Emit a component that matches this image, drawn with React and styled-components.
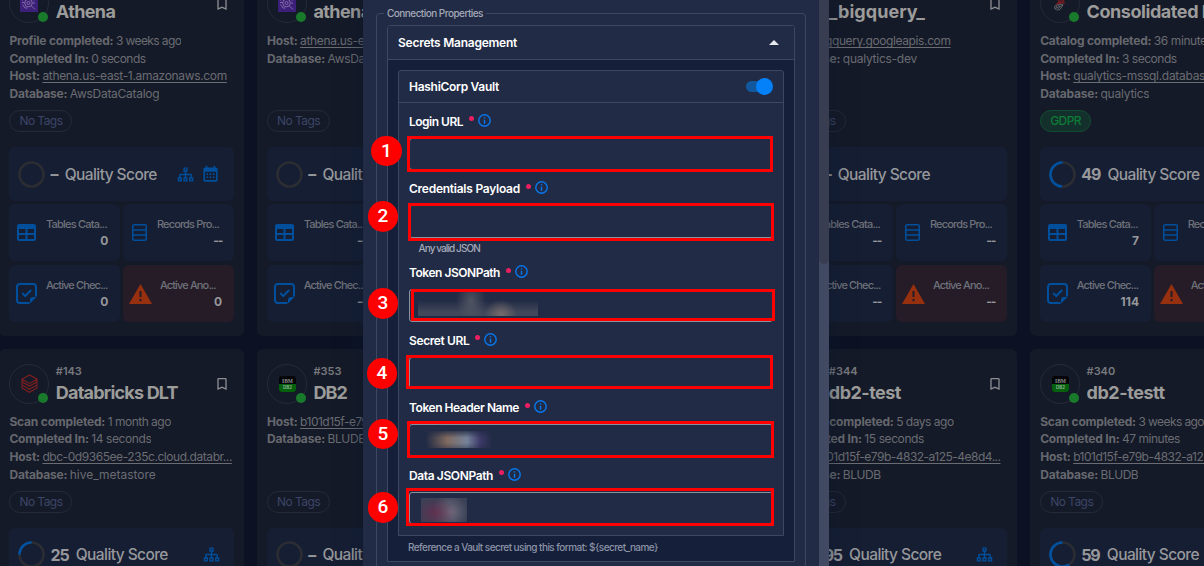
import React from "react";
import styled, { createGlobalStyle } from "styled-components";

const Global = createGlobalStyle`
  *, *::before, *::after { box-sizing: border-box; }
  html, body { margin: 0; padding: 0; background: #0c1223; overflow: hidden; }
  body { font-family: Inter, "Noto Sans", sans-serif; font-size: 12px; }
`;

/* ---------- page and card grid ---------- */

const Page = styled.main`
  position: relative;
  width: 1204px;
  height: 566px;
  overflow: hidden;
  background: #0c1223;
`;

const CardGrid = styled.div`
  display: grid;
  grid-template-columns: repeat(5, 244.8px);
  grid-auto-rows: 367.4px;
  gap: 13.2px 12.9px;
  width: 1290px;
  margin: -31.6px 0 0 -0.6px;
`;

const Card = styled.article`
  display: flex;
  flex-direction: column;
  padding: 15px 10px 0;
  border-radius: 6px;
  background: #151a28;
`;

const CardHeader = styled.header`
  display: flex;
  gap: 6.4px;
  height: 40px;
`;

const Avatar = styled.div`
  position: relative;
  display: flex;
  flex: none;
  align-items: center;
  justify-content: center;
  width: 40px;
  height: 40px;
  border: 1px solid #252b38;
  border-radius: 50%;
`;

const StatusDot = styled.span`
  position: absolute;
  right: 0;
  bottom: 0;
  width: 10px;
  height: 10px;
  border-radius: 50%;
  background: #197a2c;
`;

const Titles = styled.div`
  display: flex;
  flex: 1;
  flex-direction: column;
  gap: 2.7px;
  min-width: 0;
  white-space: nowrap;
`;

const CardId = styled.span`
  font-size: 11px;
  font-weight: 600;
  line-height: 14px;
  color: #77797d;
`;

const CardTitle = styled.h2`
  margin: 0;
  overflow: hidden;
  font-size: 18px;
  font-weight: 700;
  line-height: 24px;
  letter-spacing: ${(p) => p.$ls}em;
  color: #9c9c9b;
`;

const BookmarkSlot = styled.span`
  display: flex;
  align-items: center;
  height: 41px;
  margin-right: 4.5px;
`;

const MetaList = styled.dl`
  height: 70.8px;
  margin: 8.7px 0 0;
`;

const MetaRow = styled.div`
  display: flex;
  gap: 2.5px;
  height: 17.7px;
  line-height: 17.7px;
  white-space: nowrap;
`;

const MetaKey = styled.dt`
  flex: none;
  font-weight: 700;
  letter-spacing: -0.016em;
  color: #66686e;
`;

const MetaValue = styled.dd`
  min-width: 0;
  margin: 0;
  overflow: hidden;
  font-weight: 400;
  letter-spacing: ${(p) => p.$ls}em;
  color: #6a6c72;
  text-decoration: ${(p) => (p.$link ? "underline" : "none")};
  text-underline-offset: 2px;
`;

const Chip = styled.span`
  align-self: flex-start;
  display: flex;
  align-items: center;
  height: 22px;
  margin-top: 7.3px;
  padding: 0 9px 1px;
  border: 1px solid ${(p) => (p.$green ? "#134d31" : "#232a38")};
  border-radius: 11px;
  background: ${(p) => (p.$green ? "#13302c" : "transparent")};
  color: ${(p) => (p.$green ? "#0e7b36" : "#3c4567")};
  font-weight: ${(p) => (p.$green ? 500 : 400)};
  letter-spacing: -0.046em;
`;

const ScoreBox = styled.section`
  display: flex;
  align-items: center;
  height: 54px;
  margin-top: 15.2px;
  padding: 0 14.5px 0 9px;
  border-radius: 6px;
  background: #161e33;
  color: #97989b;
`;

const ScoreValue = styled.strong`
  margin: 0 7.4px 0 5.2px;
  font-size: 16px;
  font-weight: 700;
  letter-spacing: -0.08em;
`;

const ScoreLabel = styled.span`
  flex: 1;
  font-size: 15.5px;
  font-weight: 500;
  letter-spacing: -0.037em;
  white-space: nowrap;
`;

const ScoreIcons = styled.span`
  display: flex;
  align-items: center;
  gap: 7px;
`;

const Tiles = styled.div`
  display: grid;
  grid-template-columns: 1fr 1fr;
  grid-auto-rows: 57px;
  gap: 4px 3px;
  margin-top: 3px;
`;

const Tile = styled.div`
  display: flex;
  align-items: center;
  padding-right: 12px;
  border-radius: 6px;
  background: ${(p) => (p.$alert ? "#251c27" : "#161e33")};
`;

const TileIcon = styled.span`
  display: flex;
  flex: none;
  justify-content: center;
  width: ${(p) => p.$width}px;
  margin-right: 1.6px;
`;

const TileText = styled.div`
  display: flex;
  flex: 1;
  flex-direction: column;
  min-width: 0;
  padding-bottom: 1.6px;
  white-space: nowrap;
  color: #6f727a;
`;

const TileLabel = styled.span`
  font-size: 11px;
  font-weight: 500;
  line-height: 16px;
  letter-spacing: ${(p) => p.$ls}em;
`;

const TileValue = styled.strong`
  align-self: flex-end;
  font-size: 12px;
  font-weight: 700;
  line-height: 17px;
  letter-spacing: ${(p) => (p.$dashes ? "-0.09em" : "0")};
  color: #96979a;
`;

/* ---------- drawer ---------- */

const Drawer = styled.aside`
  position: absolute;
  top: 0;
  left: 363px;
  display: flex;
  width: 466px;
  height: 566px;
  background: #222b45;
  box-shadow: 0 0 22px rgba(10, 24, 48, 0.55);
`;

const DrawerBody = styled.div`
  flex: 1;
  padding: 5px 13px 0;
`;

const ScrollTrack = styled.div`
  width: 10px;
  background: #424a63;
`;

const ScrollThumb = styled.div`
  height: 264px;
  border-radius: 0 0 5px 5px;
  background: #393d51;
`;

const Properties = styled.fieldset`
  height: 600px;
  margin: 0;
  padding: 4px 10px 0;
  border: 1px solid #3e4761;
  border-radius: 4px;
`;

const Legend = styled.legend`
  margin-left: -3px;
  padding: 0 3px;
  font-size: 10px;
  font-weight: 500;
  line-height: 16px;
  letter-spacing: -0.053em;
  color: #a4a9b8;
`;

const Section = styled.section`
  border: 1px solid #3e4761;
  border-radius: 3px 3px 0 0;
  background: #151f39;
`;

const SectionHeader = styled.header`
  display: flex;
  align-items: center;
  justify-content: space-between;
  height: 34px;
  padding: 0 15px 0 10px;
  border-bottom: 1px solid #3e4761;
  background: #222b45;
`;

const SectionTitle = styled.h3`
  margin: 0;
  font-size: 12px;
  font-weight: 600;
  letter-spacing: ${(p) => p.$ls}em;
  color: #fff;
`;

const SectionBody = styled.div`
  padding: 10px 10px 0;
`;

const VaultPanel = styled.section`
  border: 1px solid #3e4761;
  border-radius: 3px 3px 0 0;
  background: #222b45;
`;

const VaultHeader = styled.header`
  display: flex;
  align-items: center;
  justify-content: space-between;
  height: 32px;
  padding: 0 10px;
  border-bottom: 1px solid #3e4761;
`;

const Switch = styled.span`
  display: flex;
  align-items: center;
  justify-content: flex-end;
  width: 25px;
  height: 11px;
  margin-right: 2px;
  border-radius: 6px;
  background: #11589f;
`;

const Knob = styled.span`
  flex: none;
  width: 17px;
  height: 17px;
  margin-right: -2px;
  border-radius: 50%;
  background: #0480f8;
`;

const Fields = styled.div`
  display: flex;
  flex-direction: column;
  gap: 10.5px;
  padding: 10px 10px 10.5px;
`;

const Field = styled.div`
  display: flex;
  flex-direction: column;
`;

const FieldLabel = styled.label`
  display: flex;
  align-items: center;
  height: 16px;
  margin-bottom: 8.5px;
  font-weight: 600;
  letter-spacing: ${(p) => p.$ls}em;
  color: #fff;

  svg {
    margin-bottom: 1.5px;
  }
`;

const Required = styled.span`
  width: 5px;
  height: 5px;
  margin: -5px 4px 0 5.5px;
  border-radius: 50%;
  background: #ec1f62;
`;

const Input = styled.div`
  display: flex;
  width: 363.5px;
  height: 32.5px;
  border: 1px solid #8a8f9d;
  border-radius: 3px;
`;

const Hint = styled.span`
  height: 16.5px;
  padding-left: 9.5px;
  font-size: 10px;
  font-weight: 500;
  line-height: 21px;
  letter-spacing: -0.09em;
  color: #a4a9b8;
`;

const Footnote = styled.p`
  height: 25.500px;
  margin: 0 0 0 10px;
  font-size: 10px;
  font-weight: 500;
  line-height: 23px;
  letter-spacing: -0.0555em;
  white-space: nowrap;
  color: #8c93a7;
`;

/* Obscured field values */
const Redacted = styled.span`
  width: ${(p) => p.$w}px;
  height: ${(p) => p.$h}px;
  margin: ${(p) => p.$margin};
  background: ${(p) => p.$paint};
`;

/* ---------- numbered callouts over the form ---------- */

const Outline = styled.div`
  position: absolute;
  top: ${(p) => p.$y}px;
  left: ${(p) => p.$x}px;
  width: ${(p) => p.$w}px;
  height: ${(p) => p.$h}px;
  border: 3px solid #fe0000;
`;

const Marker = styled.span`
  position: absolute;
  top: ${(p) => p.$y - 15.3}px;
  left: ${(p) => p.$x - 15.3}px;
  display: flex;
  align-items: center;
  justify-content: center;
  width: 30.6px;
  height: 30.6px;
  padding-bottom: 1px;
  border-radius: 50%;
  background: #fe0000;
  color: #fff;
  font: 500 19px Roboto, sans-serif;
`;

/* ---------- icons ---------- */

const BLUE = "#004f9c";

const Bookmark = () => (
  <svg width="16" height="16" viewBox="0 0 24 24" fill="#8d8e91">
    <path fillRule="evenodd" d="M17 3H7a2 2 0 0 0-2 2v16l7-3 7 3V5a2 2 0 0 0-2-2m0 15-5-2.2L7 18V5h10z" />
  </svg>
);

const Sitemap = () => (
  <svg width="17" height="17" viewBox="0 0 24 24" fill={BLUE}>
    <path
      fillRule="evenodd"
      d="M9 2v6h2v3H5c-1.100 0-2 .9-2 2v3H1v6h6v-6H5v-3h6v3H9v6h6v-6h-2v-3h6v3h-2v6h6v-6h-2v-3c0-1.100-.9-2-2-2h-6V8h2V2zm2 2h2v2h-2zM3 18h2v2H3zm8 0h2v2h-2zm8 0h2v2h-2z"
    />
  </svg>
);

const Calendar = () => (
  <svg width="19" height="19" viewBox="0 0 24 24" fill={BLUE}>
    <path
      fillRule="evenodd"
      d="M19 3h-1V1h-2v2H8V1H6v2H5a2 2 0 0 0-2 2v14a2 2 0 0 0 2 2h14a2 2 0 0 0 2-2V5a2 2 0 0 0-2-2m0 16H5V8.500h14zM7 10.500h2v2H7zm4 0h2v2h-2zm4 0h2v2h-2zM7 14.500h2v2H7zm4 0h2v2h-2zm4 0h2v2h-2z"
    />
  </svg>
);

const TableIcon = () => (
  <svg width="19" height="17" viewBox="0 0 19 17">
    <rect width="19" height="17" rx="2" fill={BLUE} />
    <path d="M2 5h6.500v4H2zM10.500 5H17v4h-6.500zM2 11h6.500v4H2zM10.500 11H17v4h-6.500z" fill="#161e33" />
  </svg>
);

const ListIcon = () => (
  <svg width="15" height="17" viewBox="0 0 15 17" fill="none" stroke={BLUE} strokeWidth="1.500">
    <rect x=".75" y=".75" width="13.500" height="15.500" rx="1.500" />
    <path d="M1 6h13M1 11h13" />
  </svg>
);

const NoteCheck = () => (
  <svg width="21" height="21" viewBox="0 0 21 21" fill="none" stroke={BLUE} strokeWidth="2">
    <path d="M13.500 20H4a3 3 0 0 1-3-3V4a3 3 0 0 1 3-3h13a3 3 0 0 1 3 3v9.500" />
    <path d="m6.200 10 3 3 6-6" />
    <path d="M14 20.500v-3.500a3 3 0 0 1 3-3h3.500z" fill={BLUE} stroke="none" />
  </svg>
);

const Alert = () => (
  <svg width="23" height="20" viewBox="0 0 23 20">
    <path d="M11.500 0 23 20H0z" fill="#97300f" />
    <path d="M10.500 7h2v6h-2zM10.500 15h2v2.200h-2z" fill="#251c27" />
  </svg>
);

const Info = () => (
  <svg width="13" height="13" viewBox="0 0 13 13" fill="none">
    <circle cx="6.500" cy="6.500" r="5.700" stroke="#0878ee" strokeWidth="1.400" />
    <path d="M6.500 5.800v4M6.500 3.200v1.300" stroke="#0878ee" strokeWidth="1.400" />
  </svg>
);

const Caret = () => (
  <svg width="10" height="5" viewBox="0 0 10 5">
    <path d="M5 0l5 5H0z" fill="#e6e8ee" />
  </svg>
);

const Ring = ({ value }) => {
  const c = 2 * Math.PI * 12;
  return (
    <svg width="27" height="27" viewBox="0 0 27 27" fill="none" strokeWidth="2.600">
      <circle cx="13.500" cy="13.500" r="12" stroke="#2b2d33" />
      {value > 0 && (
        <circle
          cx="13.500"
          cy="13.500"
          r="12"
          stroke="#00519f"
          strokeDasharray={`${(c * value) / 100} ${c}`}
          transform="translate(27 0) scale(-1 1) rotate(-90 13.500 13.500)"
        />
      )}
    </svg>
  );
};

const AthenaLogo = () => (
  <svg width="18" height="18" viewBox="0 0 18 18">
    <rect width="18" height="18" fill="#3c1f78" />
    <g fill="none" stroke="#7f6ba5" strokeWidth="1">
      <circle cx="8.500" cy="9" r="3.800" />
      <circle cx="8.500" cy="9" r="1.500" />
      <path d="m11.300 11.800 3.700 3.700M2.500 6.500 5 3.500h6l3 3M2.500 10.500 5 14h2.500M2 8.500h2.500M13 9h2" />
    </g>
  </svg>
);

const DatabricksLogo = () => (
  <svg width="17" height="19" viewBox="0 0 17 19" fill="none" stroke="#7d1f20" strokeWidth="1.200">
    <path d="M1 5.200 8.500 1 16 5.200 8.500 9.400zM1 5.200v2.600L8.500 12 16 7.800V5.200M1 8.800v2.200l7.500 4.200L16 11V8.800M1 12v2l7.500 4.200L16 14v-2" />
  </svg>
);

const Db2Logo = () => (
  <svg width="17" height="16" viewBox="0 0 17 16">
    <rect width="17" height="16" rx="3" fill="#040506" />
    <path d="M0 8h17v5a3 3 0 0 1-3 3H3a3 3 0 0 1-3-3z" fill="#03600d" />
    <g fontWeight="700" textAnchor="middle">
      <text x="8.500" y="6.800" fontSize="5.500" fill="#8a8c8d" fontFamily="Liberation Serif, serif">IBM</text>
      <text x="8.500" y="13" fontSize="4.500" fill="#8bb08e" fontFamily="Inter, sans-serif">DB2</text>
    </g>
  </svg>
);

const SqlServerLogo = () => (
  <svg width="18" height="18" viewBox="0 0 18 18" fill="none">
    <path d="M4 4c3 0 4 2 6 3 2 .6 3 1 5 3-3-1-4 0-6 0s-4 1-5 2c1-3 2-3 3-4S6 5 4 4z" fill="#6d1d22" />
    <path d="m12 2-2 4 4 2M13 4l-1 5" stroke="#6d1d22" />
    <path d="M3.500 12.500c2-1.500 5-2.500 8.500-2-1 2-2 5-4.500 5.500-2 0-3-.6-3.600-1.200zM5 12l3 3.500M7.500 11l2 3.500M4 14.500l7-3" stroke="#626468" strokeWidth=".9" />
  </svg>
);

const LOGOS = { athena: AthenaLogo, databricks: DatabricksLogo, db2: Db2Logo, mssql: SqlServerLogo };

/* ---------- data ---------- */

const EMPTY = ["--", "--", "--", "--"];
const DBHOST = "b101d15f-e79b-4832-a125-4e8d4...";

const CARDS = [
  {
    id: "#142", title: "Athena", ls: -0.034, logo: "athena",
    meta: [
      ["Profile completed:", "3 weeks ago", -0.049],
      ["Completed In:", "0 seconds", -0.045],
      ["Host:", "athena.us-east-1.amazonaws.com", -0.0274, true],
      ["Database:", "AwsDataCatalog", -0.0234],
    ],
    tag: "No Tags", score: 0, sitemap: true, calendar: true, stats: ["0", "--", "0", "0"],
  },
  {
    id: "#141", title: "athena", ls: -0.034, logo: "athena",
    meta: [
      ["Host:", "athena.us-east-1.amazonaws.com", -0.0274, true],
      ["Database:", "AwsDataCatalog", -0.0234],
    ],
    tag: "No Tags", score: 0, stats: EMPTY,
  },
  null,
  {
    id: "#131", title: "_bigquery_", ls: 0.002, logo: "mssql",
    meta: [
      ["Host:", "bigquery.googleapis.com", -0.032, true],
      ["Database:", "qualytics-dev", -0.022],
    ],
    tag: "No Tags", score: 0, stats: EMPTY,
  },
  {
    id: "#130", title: "Consolidated Data", ls: -0.0242, logo: "mssql",
    meta: [
      ["Catalog completed:", "36 minutes ago", -0.035],
      ["Completed In:", "3 seconds", -0.04],
      ["Host:", "qualytics-mssql.database.windows", -0.025, true],
      ["Database:", "qualytics", -0.02],
    ],
    tag: "GDPR", score: 49, stats: ["7", "--", "114", "--"],
  },
  {
    id: "#143", title: "Databricks DLT", ls: -0.0445, logo: "databricks",
    meta: [
      ["Scan completed:", "1 month ago", -0.042],
      ["Completed In:", "14 seconds", -0.034],
      ["Host:", "dbc-0d9365ee-235c.cloud.databr...", -0.0371, true],
      ["Database:", "hive_metastore", -0.0017],
    ],
    tag: "No Tags", score: 25, sitemap: true, stats: EMPTY,
  },
  {
    id: "#353", title: "DB2", ls: -0.05, logo: "db2",
    meta: [
      ["Host:", DBHOST, -0.0425, true],
      ["Database:", "BLUDB", -0.03],
    ],
    tag: "No Tags", score: 0, stats: EMPTY,
  },
  null,
  {
    id: "#344", title: "db2-test", ls: -0.03, logo: "db2",
    meta: [
      ["Catalog completed:", "5 days ago", -0.04],
      ["Completed In:", "15 seconds", -0.034],
      ["Host:", DBHOST, -0.0425, true],
      ["Database:", "BLUDB", -0.04],
    ],
    tag: "No Tags", score: 95, sitemap: true, stats: EMPTY,
  },
  {
    id: "#340", title: "db2-testt", ls: -0.025, logo: "db2",
    meta: [
      ["Scan completed:", "3 weeks ago", -0.049],
      ["Completed In:", "47 minutes", -0.04],
      ["Host:", DBHOST, -0.0425, true],
      ["Database:", "BLUDB", -0.04],
    ],
    tag: "No Tags", score: 59, stats: EMPTY,
  },
];

const TILES = [
  { label: "Tables Cata...", ls: -0.0707, Icon: TableIcon, width: 35 },
  { label: "Records Pro...", ls: -0.0772, Icon: ListIcon, width: 32 },
  { label: "Active Chec...", ls: -0.0785, Icon: NoteCheck, width: 35 },
  { label: "Active Ano...", ls: -0.0785, Icon: Alert, width: 35, alert: true },
];

const FIELDS = [
  { label: "Login URL", ls: -0.0421 },
  { label: "Credentials Payload", ls: -0.0209, hint: "Any valid JSON" },
  {
    label: "Token JSONPath", ls: -0.039,
    redacted: {
      w: 120, h: 24, margin: "2px 0 0 8px",
      paint:
        "radial-gradient(ellipse 15px 20px at 53px 9px, rgba(96,98,108,.75), transparent), radial-gradient(ellipse 16px 14px at 83px 22px, rgba(132,118,112,.75), transparent), linear-gradient(transparent 35%, rgba(76,82,98,.75) 85%)",
    },
  },
  { label: "Secret URL", ls: -0.032 },
  {
    label: "Token Header Name", ls: -0.0375,
    redacted: {
      w: 66, h: 17, margin: "6px 0 0 16px",
      paint:
        "linear-gradient(#222b45cc, transparent 40%, transparent 70%, #222b4566), linear-gradient(90deg, transparent, #80695f 32%, #75839a 62%, #3d3968 82%, transparent)",
    },
  },
  {
    label: "Data JSONPath", ls: -0.032,
    redacted: {
      w: 46, h: 24, margin: "5px 0 0 11px",
      paint:
        "radial-gradient(ellipse 20px 16px at 14px 15px, rgba(105,45,78,.8), transparent), radial-gradient(ellipse 18px 18px at 29px 14px, rgba(132,124,140,.75), transparent), #3a4056",
    },
  },
];

const CALLOUTS = [
  { box: [407, 136, 366, 36], dot: [386.5, 151] },
  { box: [408, 203, 366, 38], dot: [383, 216.5] },
  { box: [411, 289, 364, 32], dot: [383, 303.5] },
  { box: [406, 355, 367, 34], dot: [382, 373.5] },
  { box: [407, 421, 367, 37], dot: [383, 434] },
  { box: [406, 488, 368, 37.5], dot: [383, 507.5] },
];

/* ---------- components ---------- */

function DatastoreCard({ data }) {
  const Logo = LOGOS[data.logo];
  return (
    <Card>
      <CardHeader>
        <Avatar>
          <Logo />
          <StatusDot />
        </Avatar>
        <Titles>
          <CardId>{data.id}</CardId>
          <CardTitle $ls={data.ls}>{data.title}</CardTitle>
        </Titles>
        <BookmarkSlot>
          <Bookmark />
        </BookmarkSlot>
      </CardHeader>
      <MetaList>
        {data.meta.map(([key, value, ls, link]) => (
          <MetaRow key={key}>
            <MetaKey>{key}</MetaKey>
            <MetaValue $ls={ls} $link={link}>{value}</MetaValue>
          </MetaRow>
        ))}
      </MetaList>
      <Chip $green={data.tag !== "No Tags"}>{data.tag}</Chip>
      <ScoreBox>
        <Ring value={data.score} />
        <ScoreValue>{data.score || "–"}</ScoreValue>
        <ScoreLabel>Quality Score</ScoreLabel>
        <ScoreIcons>
          {data.sitemap && <Sitemap />}
          {data.calendar && <Calendar />}
        </ScoreIcons>
      </ScoreBox>
      <Tiles>
        {TILES.map(({ label, ls, Icon, width, alert }, i) => (
          <Tile key={label} $alert={alert}>
            <TileIcon $width={width}>
              <Icon />
            </TileIcon>
            <TileText>
              <TileLabel $ls={ls}>{label}</TileLabel>
              <TileValue $dashes={data.stats[i] === "--"}>{data.stats[i]}</TileValue>
            </TileText>
          </Tile>
        ))}
      </Tiles>
    </Card>
  );
}

function VaultField({ field }) {
  const r = field.redacted;
  return (
    <Field>
      <FieldLabel $ls={field.ls}>
        {field.label}
        <Required />
        <Info />
      </FieldLabel>
      <Input>{r && <Redacted $w={r.w} $h={r.h} $margin={r.margin} $paint={r.paint} />}</Input>
      {field.hint && <Hint>{field.hint}</Hint>}
    </Field>
  );
}

export default function App() {
  return (
    <Page>
      <Global />
      <CardGrid>
        {CARDS.map((c, i) => (c ? <DatastoreCard key={c.id} data={c} /> : <Card key={i} />))}
      </CardGrid>
      <Drawer>
        <DrawerBody>
          <Properties>
            <Legend>Connection Properties</Legend>
            <Section>
              <SectionHeader>
                <SectionTitle $ls={-0.0209}>Secrets Management</SectionTitle>
                <Caret />
              </SectionHeader>
              <SectionBody>
                <VaultPanel>
                  <VaultHeader>
                    <SectionTitle $ls={-0.024}>HashiCorp Vault</SectionTitle>
                    <Switch>
                      <Knob />
                    </Switch>
                  </VaultHeader>
                  <Fields>
                    {FIELDS.map((f) => (
                      <VaultField key={f.label} field={f} />
                    ))}
                  </Fields>
                </VaultPanel>
                <Footnote>{"Reference a Vault secret using this format: ${secret_name}"}</Footnote>
              </SectionBody>
            </Section>
          </Properties>
        </DrawerBody>
        <ScrollTrack>
          <ScrollThumb />
        </ScrollTrack>
      </Drawer>
      {CALLOUTS.map(({ box }, i) => (
        <Outline key={i} $x={box[0]} $y={box[1]} $w={box[2]} $h={box[3]} />
      ))}
      {CALLOUTS.map(({ dot }, i) => (
        <Marker key={i} $x={dot[0]} $y={dot[1]}>{i + 1}</Marker>
      ))}
    </Page>
  );
}
